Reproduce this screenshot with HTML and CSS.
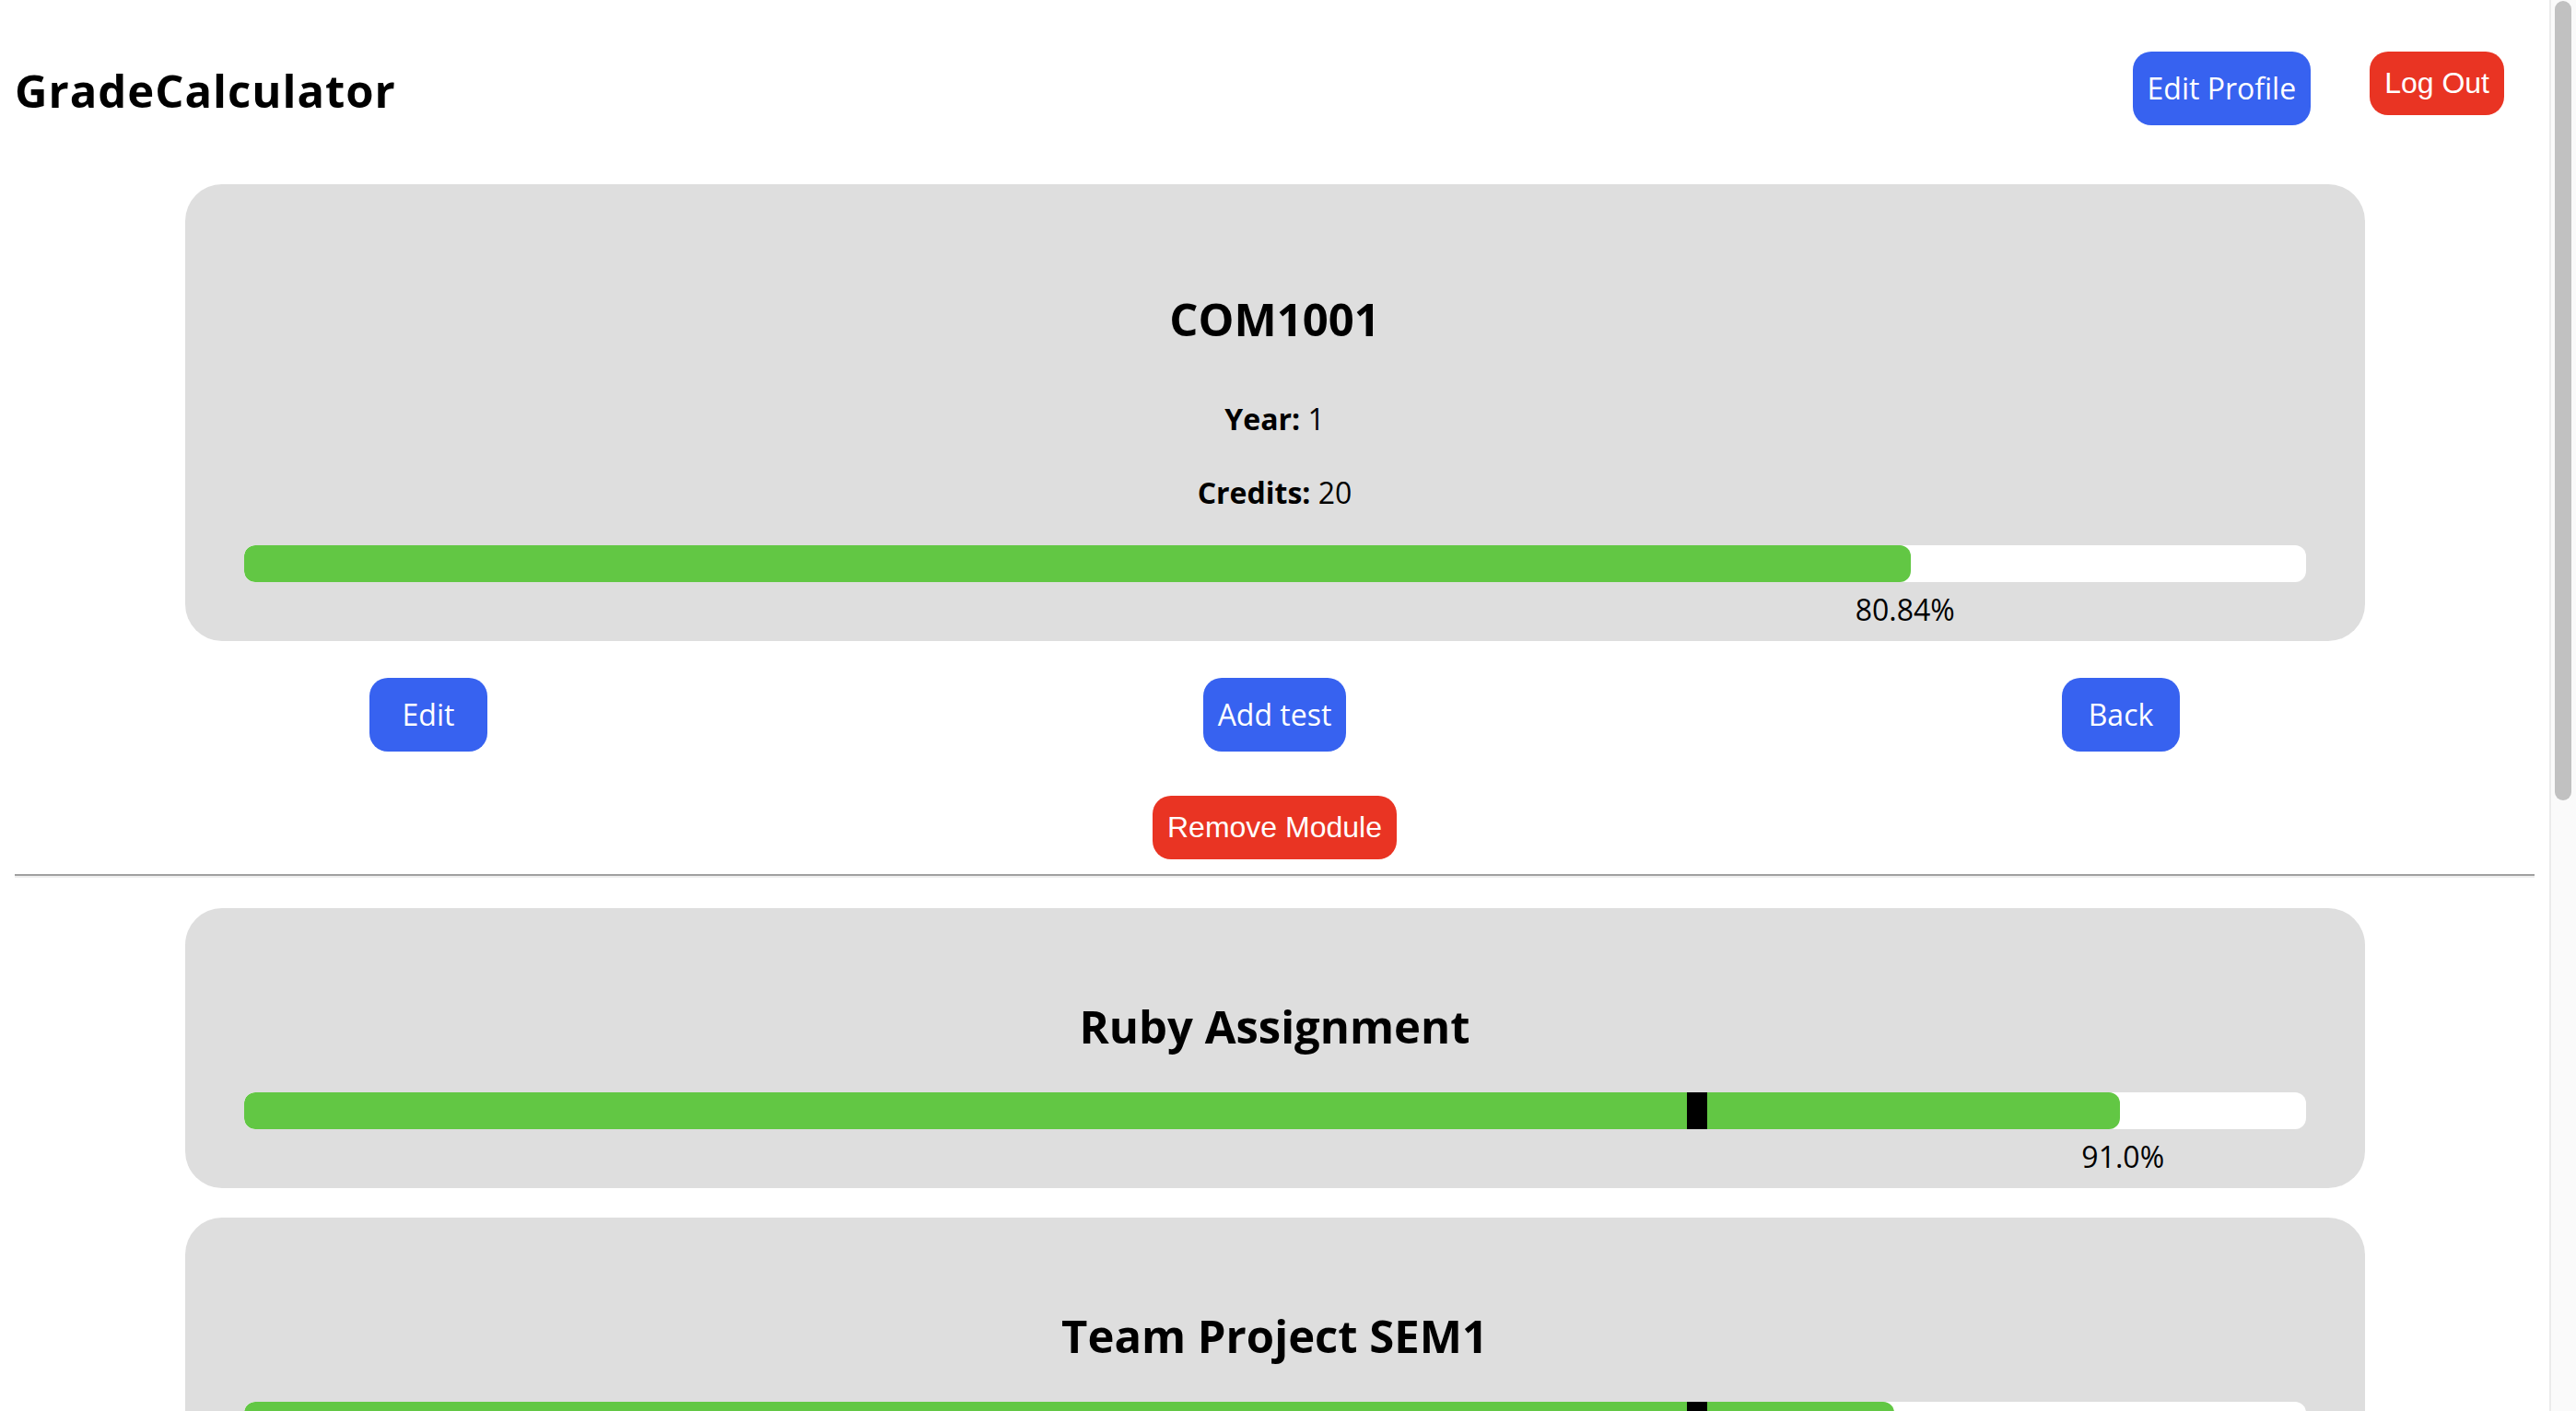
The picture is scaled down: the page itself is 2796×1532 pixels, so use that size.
FILE: index.html
```html
<!DOCTYPE html>
<html lang="en">
<head>
<meta charset="utf-8">
<title>GradeCalculator</title>
<link rel="stylesheet" href="styles.css">
</head>
<body>
  <div class="page">
    <header class="topbar">
      <h1 class="brand">GradeCalculator</h1>
      <nav class="nav">
        <button class="btn btn-blue">Edit Profile</button>
        <button class="btn-sys btn-red">Log Out</button>
      </nav>
    </header>

    <main>
      <section class="card module-card">
        <h2 class="card-title">COM1001</h2>
        <p class="meta meta-year"><strong>Year:</strong> 1</p>
        <p class="meta meta-credits"><strong>Credits:</strong> 20</p>
        <div class="track">
          <div class="fill" style="width: 80.84%"></div>
        </div>
        <div class="label" style="width: calc(80.84% + 48px)">80.84%</div>
      </section>

      <div class="actions">
        <button class="btn btn-blue btn-min">Edit</button>
        <button class="btn btn-blue btn-min">Add test</button>
        <button class="btn btn-blue btn-min">Back</button>
      </div>
      <div class="remove-row">
        <button class="btn-sys btn-red">Remove Module</button>
      </div>

      <hr class="divider">

      <section class="card test-card">
        <h2 class="card-title">Ruby Assignment</h2>
        <div class="track">
          <div class="fill" style="width: 91.0%"></div>
          <div class="marker" style="left: 70%"></div>
        </div>
        <div class="label" style="width: calc(91.0% + 48px)">91.0%</div>
      </section>

      <section class="card test-card last-card">
        <h2 class="card-title">Team Project SEM1</h2>
        <div class="track">
          <div class="fill" style="width: 80.06%"></div>
          <div class="marker" style="left: 70%"></div>
        </div>
      </section>
    </main>
  </div>
  <aside class="scrollbar" aria-hidden="true">
    <div class="thumb"></div>
  </aside>
</body>
</html>
```

FILE: styles.css
```css
html {
  background: #ffffff;
}

body {
  margin: 0;
  display: flex;
  align-items: flex-start;
  font-family: "Open Sans", "Liberation Sans", sans-serif;
  font-size: 32px;
  color: #000000;
}

.page {
  flex: 1;
  min-width: 0;
  margin: 0 16px;
  padding-bottom: 64px;
}

.scrollbar {
  flex: none;
  width: 29px;
  height: 100vh;
  box-sizing: border-box;
  background: #fafafa;
  border-left: 2px solid #ebebeb;
  padding: 1px 5px 0 4px;
}

.thumb {
  height: 868px;
  background: #c1c1c1;
  border-radius: 9px;
}

.topbar {
  display: flex;
  justify-content: space-between;
  align-items: flex-start;
}

.brand {
  margin: 74px 0 0;
  font-size: 49px;
  line-height: 49px;
  font-weight: 700;
  letter-spacing: 1px;
}

.nav {
  display: flex;
  align-items: flex-start;
  gap: 64px;
  margin-top: 56px;
  margin-right: 33px;
}

.btn {
  font-family: "Open Sans", "Liberation Sans", sans-serif;
  font-size: 32px;
  line-height: 48px;
  padding: 16px;
  border: 0;
  border-radius: 20px;
  color: #ffffff;
  box-sizing: border-box;
}

.btn-sys {
  font-family: "Liberation Sans", Arial, sans-serif;
  font-size: 32px;
  line-height: normal;
  padding: 16px;
  border: 0;
  border-radius: 20px;
  color: #ffffff;
}

.btn-blue {
  background: #3762f0;
}

.btn-red {
  background: #e93423;
}

.btn-min {
  min-width: 128px;
}

.card {
  width: 2366px;
  margin: 0 auto;
  box-sizing: border-box;
  background: #dedede;
  border-radius: 40px;
  padding: 104px 64px 10px;
  text-align: center;
}

.module-card {
  margin-top: 64px;
  padding-top: 122px;
}

.card-title {
  margin: 0 0 47px;
  font-size: 49px;
  line-height: 49px;
  font-weight: 700;
}

.module-card .card-title {
  margin-bottom: 60px;
}

.meta {
  margin: 0;
  line-height: 48px;
}

.meta strong {
  font-weight: 700;
}

.meta-year {
  margin-bottom: 32px;
}

.meta-credits {
  margin-bottom: 33px;
}

.track {
  position: relative;
  height: 40px;
  background: #ffffff;
  border-radius: 12px;
  overflow: hidden;
}

.fill {
  height: 100%;
  background: #62c744;
  border-radius: 12px;
}

.marker {
  position: absolute;
  top: 0;
  width: 22px;
  height: 100%;
  background: #000000;
}

.label {
  margin-top: 6px;
  line-height: 48px;
  text-align: right;
}

.actions {
  width: 1965px;
  margin: 40px auto 0;
  display: flex;
  justify-content: space-between;
}

.remove-row {
  display: flex;
  justify-content: center;
  margin-top: 48px;
}

.divider {
  margin: 16px 0 33px;
  height: 0;
  border: 0;
  border-top: 2px solid #a0a0a0;
  border-bottom: 2px solid #eeeeee;
}

.test-card {
  margin-bottom: 32px;
}

.last-card {
  padding-bottom: 64px;
}
```
